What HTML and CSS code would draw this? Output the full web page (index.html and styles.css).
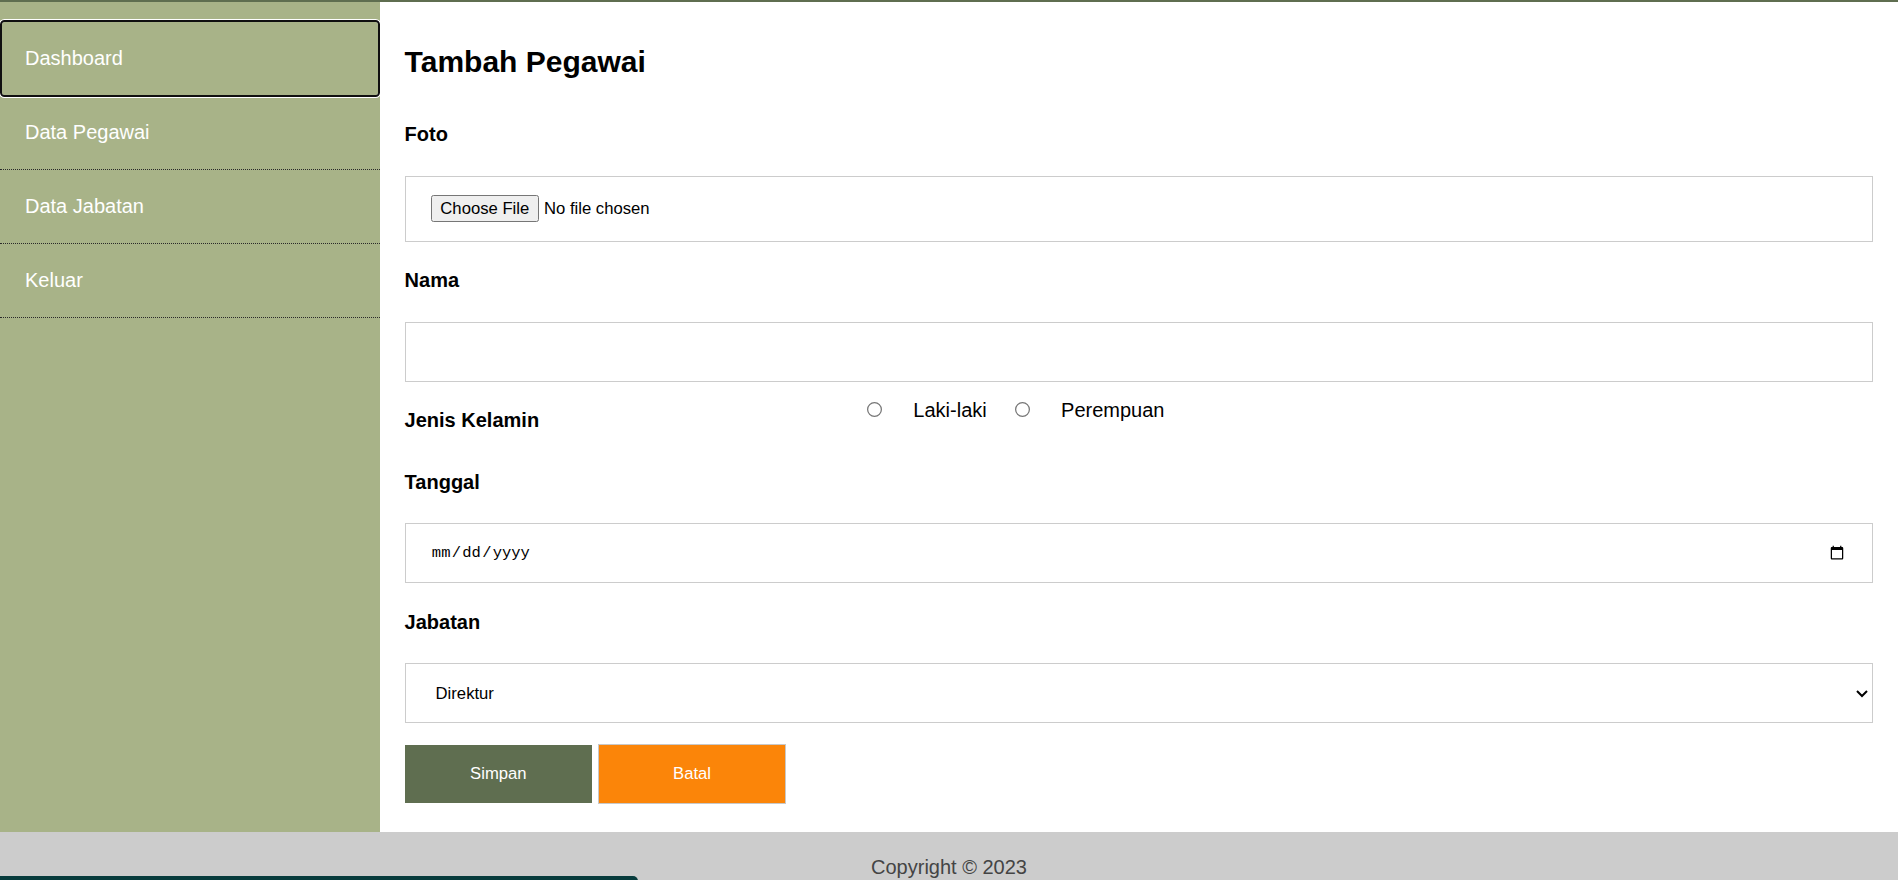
FILE: index.html
```html
<!DOCTYPE html>
<html lang="id">
<head>
<meta charset="utf-8">
<title>Tambah Pegawai</title>
<link rel="stylesheet" href="styles.css">
</head>
<body>
<div class="app">
  <div class="topbar"></div>
  <div class="layout">
    <aside class="sidebar">
      <ul class="nav">
        <li class="nav-item"><a class="nav-link active" href="#">Dashboard</a></li>
        <li class="nav-item"><a class="nav-link" href="#">Data Pegawai</a></li>
        <li class="nav-item"><a class="nav-link" href="#">Data Jabatan</a></li>
        <li class="nav-item"><a class="nav-link" href="#">Keluar</a></li>
      </ul>
    </aside>
    <main class="content">
      <h2 class="title">Tambah Pegawai</h2>
      <form class="form" onsubmit="return false">
        <div class="field">
          <label class="label" for="foto">Foto</label>
          <input class="control control-file" type="file" id="foto">
        </div>
        <div class="field">
          <label class="label" for="nama">Nama</label>
          <input class="control control-text" type="text" id="nama">
        </div>
        <div class="field field-gender">
          <label class="label label-inline">Jenis Kelamin</label>
          <div class="radio-group">
            <input class="radio" type="radio" name="jk" id="jk-l">
            <label class="radio-label" for="jk-l">Laki-laki</label>
            <input class="radio" type="radio" name="jk" id="jk-p">
            <label class="radio-label" for="jk-p">Perempuan</label>
          </div>
        </div>
        <div class="field">
          <label class="label" for="tanggal">Tanggal</label>
          <input class="control control-date" type="date" id="tanggal">
        </div>
        <div class="field field-last">
          <label class="label" for="jabatan">Jabatan</label>
          <select class="control control-select" id="jabatan">
            <option>Direktur</option>
            <option>Manajer</option>
            <option>Staff</option>
          </select>
        </div>
        <div class="actions">
          <button class="btn btn-save" type="submit">Simpan</button>
          <button class="btn btn-cancel" type="button">Batal</button>
        </div>
      </form>
    </main>
  </div>
  <footer class="footer">
    <p class="copyright">Copyright © 2023</p>
    <div class="footer-bar"></div>
  </footer>
</div>
</body>
</html>
```
FILE: styles.css
```css
html, body {
  margin: 0;
  padding: 0;
}

body {
  font-family: "Liberation Sans", Arial, sans-serif;
  background: #ffffff;
  color: #000000;
}

.app {
  zoom: 1.25;
}

.topbar {
  height: 1.6px;
  background: #5f6e50;
}

.layout {
  display: flex;
  align-items: stretch;
}

.sidebar {
  width: 20%;
  flex: 0 0 20%;
  background: #a8b388;
}

.nav {
  list-style: none;
  margin: 16px 0;
  padding: 0;
}

.nav-item {
  border-bottom: 1px dotted #2a2a2a;
}

.nav-link {
  display: block;
  padding: 20px 20px;
  color: #ffffff;
  font-size: 16px;
  text-decoration: none;
  border-radius: 2px;
}

.nav-link.active {
  margin: 0 1.6px;
  padding-left: 18.4px;
  outline: 1.6px solid #101010;
  outline-offset: 0;
  box-shadow: 0 0 0 2.4px #ffffff;
  position: relative;
}

.content {
  flex: 1 1 auto;
  min-width: 0;
  padding: 20px 20px 22.5px;
  background: #ffffff;
}

.title {
  margin: 14px 0 35.8px;
  font-size: 24px;
  font-weight: bold;
}

.form {
  margin: 0;
}

.field {
  margin-bottom: 22px;
}

.field-last {
  margin-bottom: 17.2px;
}

.label {
  display: block;
  margin-bottom: 23.5px;
  font-size: 16px;
  font-weight: bold;
}

.field-gender {
  display: flex;
  align-items: flex-start;
  margin-bottom: 30.7px;
}

.label-inline {
  flex: 0 0 370px;
  margin-bottom: 0;
}

.radio-group {
  display: flex;
  align-items: center;
  margin-top: -8.6px;
  font-size: 16px;
}

.radio {
  margin: 0 24px 0 0;
  width: 13px;
  height: 13px;
}

.radio-label {
  margin-right: 22.5px;
}

.control {
  display: block;
  width: 100%;
  box-sizing: border-box;
  height: 48px;
  margin: 0;
  padding: 15px 20px;
  border: 1px solid #cccccc;
  border-radius: 0;
  background: #ffffff;
  color: #000000;
}

.control-text,
.control-file,
.control-select {
  font-family: "Liberation Sans", Arial, sans-serif;
  font-size: 13.333px;
}

.control-date {
  font-family: "Liberation Mono", monospace;
  font-size: 12.4px;
}

.control-file {
  height: 53px;
  padding: 15px 20px;
}

.control-file::file-selector-button {
  font-family: "Liberation Sans", Arial, sans-serif;
  font-size: 13.333px;
  padding: 2px 7px;
  margin-right: 4px;
  border: 1px solid #767676;
  border-radius: 2px;
  background: #efefef;
  color: #000000;
}

.actions {
  display: flex;
  align-items: center;
  gap: 5px;
}

.btn {
  width: 150px;
  box-sizing: border-box;
  padding: 15px 10px;
  font-family: "Liberation Sans", Arial, sans-serif;
  font-size: 13.333px;
  line-height: normal;
  color: #ffffff;
  border-radius: 0;
  cursor: pointer;
}

.btn-save {
  background: #5f6e50;
  border: none;
}

.btn-cancel {
  background: #fb8509;
  border: 1px solid #c8c8c8;
}

.footer {
  position: relative;
  background: #cccccc;
  padding: 19px 0 20px;
  text-align: center;
}

.copyright {
  margin: 0;
  font-size: 16px;
  color: #444444;
}

.footer-bar {
  position: absolute;
  left: 0;
  top: 35.2px;
  width: 510px;
  height: 12px;
  background: #073b3c;
  border-top-right-radius: 4px;
}
```
